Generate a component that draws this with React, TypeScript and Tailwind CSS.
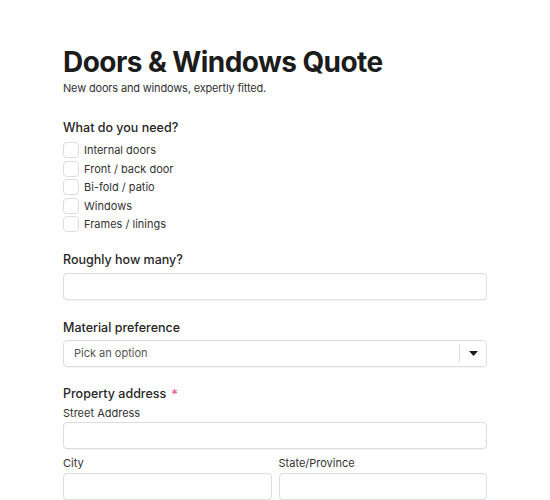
import { useState } from 'react';

const needs = ['Internal doors', 'Front / back door', 'Bi-fold / patio', 'Windows', 'Frames / linings'];

function Label({ children, required }: { children: React.ReactNode; required?: boolean }) {
  return (
    <div className="text-[12.5px] font-medium text-[#262626] leading-[16px] flex items-center gap-[5px]">
      {children}
      {required && <span className="text-[#e8588f] text-[13px] leading-none">*</span>}
    </div>
  );
}

function TextInput() {
  return (
    <input
      type="text"
      className="w-full h-[27px] rounded-[4px] border border-[#dcdde0] bg-white shadow-[0_1px_1px_rgba(0,0,0,0.04)] px-2 text-[12px] outline-none"
    />
  );
}

export default function App() {
  const [checked, setChecked] = useState<string[]>([]);
  const toggle = (n: string) =>
    setChecked((c) => (c.includes(n) ? c.filter((x) => x !== n) : [...c, n]));

  return (
    <div className="min-h-screen bg-white font-['Inter',sans-serif] text-[#262626]">
      <div className="w-[424px] ml-[63px] pt-[45px]">
        <h1 className="text-[28px] font-bold tracking-[-0.02em] leading-[34px] text-[#1c1c1c]">
          Doors &amp; Windows Quote
        </h1>
        <p className="text-[11px] tracking-[-0.015em] leading-[14px] mt-[2px] text-[#333]">
          New doors and windows, expertly fitted.
        </p>

        {/* What do you need */}
        <div className="mt-[25px]">
          <Label>What do you need?</Label>
          <div className="mt-[6px] flex flex-col gap-[2.5px]">
            {needs.map((n) => (
              <label key={n} className="flex items-center gap-[5px] cursor-pointer">
                <span
                  onClick={() => toggle(n)}
                  className={`w-[16px] h-[16px] rounded-[4px] border ${
                    checked.includes(n) ? 'bg-[#333] border-[#333]' : 'border-[#dcdde0] bg-white'
                  }`}
                />
                <span className="text-[11px] leading-[16px] text-[#333]">{n}</span>
              </label>
            ))}
          </div>
        </div>

        {/* Quantity */}
        <div className="mt-[20px]">
          <Label>Roughly how many?</Label>
          <div className="mt-[5px]">
            <TextInput />
          </div>
        </div>

        {/* Material */}
        <div className="mt-[20px]">
          <Label>Material preference</Label>
          <div className="mt-[4px] h-[27px] rounded-[4px] border border-[#dcdde0] bg-white shadow-[0_1px_1px_rgba(0,0,0,0.04)] flex items-center">
            <span className="flex-1 pl-[10px] text-[11px] text-[#555]">Pick an option</span>
            <span className="w-px h-[17px] bg-[#dcdde0]" />
            <span className="w-[26px] flex items-center justify-center">
              <svg width="9" height="5" viewBox="0 0 9 5">
                <path d="M0 0h9L4.5 5z" fill="#1c1c1c" />
              </svg>
            </span>
          </div>
        </div>

        {/* Address */}
        <div className="mt-[19px]">
          <Label required>Property address</Label>
          <div className="mt-[4px] text-[11px] leading-[14px] text-[#333]">Street Address</div>
          <div className="mt-[2px]">
            <TextInput />
          </div>
          <div className="mt-[7px] grid grid-cols-2 gap-[7px]">
            <div>
              <div className="text-[11px] leading-[14px] text-[#333]">City</div>
              <div className="mt-[3px]">
                <TextInput />
              </div>
            </div>
            <div>
              <div className="text-[11px] leading-[14px] text-[#333]">State/Province</div>
              <div className="mt-[3px]">
                <TextInput />
              </div>
            </div>
          </div>
        </div>
      </div>
    </div>
  );
}
